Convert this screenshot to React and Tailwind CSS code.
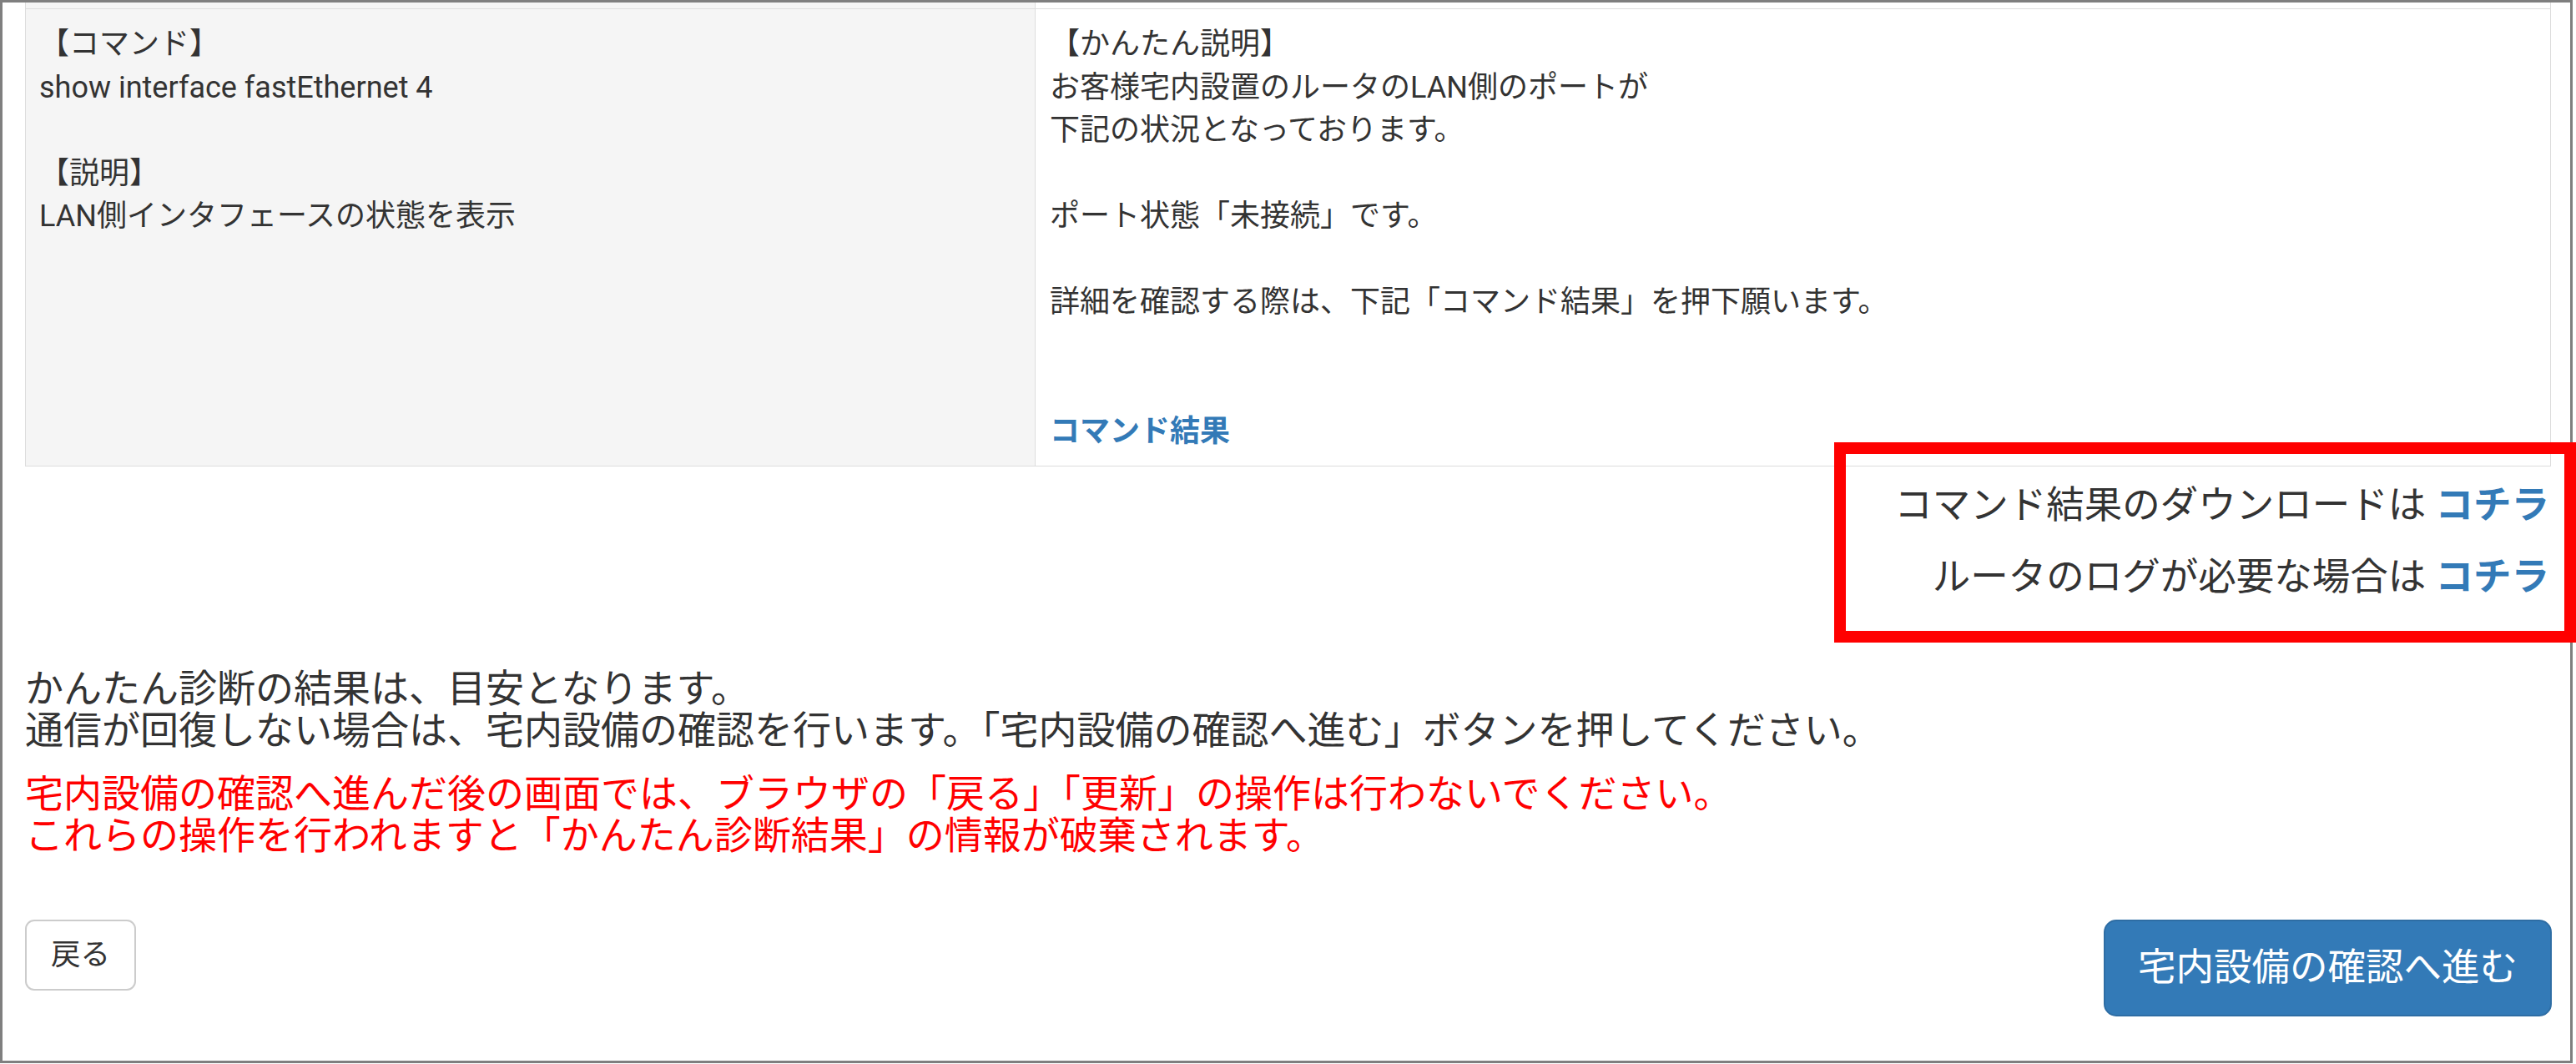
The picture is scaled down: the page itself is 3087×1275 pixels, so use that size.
import React from 'react';

const LEFT_LINES = ['【コマンド】', 'show interface fastEthernet 4', '', '【説明】', 'LAN側インタフェースの状態を表示'];

const RIGHT_LINES = [
  '【かんたん説明】',
  'お客様宅内設置のルータのLAN側のポートが',
  '下記の状況となっております。',
  '',
  'ポート状態「未接続」です。',
  '',
  '詳細を確認する際は、下記「コマンド結果」を押下願います。',
  '',
  ''
];

const Lines = ({ lines }) =>
  lines.map((line, i) => (
    <div key={i} className="h-[51.5px] whitespace-nowrap">
      {line}
    </div>
  ));

const App = () => {
  return (
    <div className="relative w-[3087px] h-[1275px] bg-white text-[#333333] font-[Roboto,'Noto_Sans_CJK_JP',sans-serif]">
      <div className="w-[3083px] h-[1274px] border-[3px] border-[#7f7f7f] pl-[27px] overflow-hidden">
        <div className="w-[3027px]">
          {/* result table (previous row is cut off at the top) */}
          <div className="border-x border-b border-[#dddddd]">
            <div className="grid grid-cols-[1210px_1fr] h-[7px]">
              <div className="bg-[#f5f5f5] border-r border-[#dddddd]" />
              <div />
            </div>
            <div className="grid grid-cols-[1210px_1fr] border-t border-[#dddddd] text-[36px] leading-[51.5px]">
              <div className="bg-[#f5f5f5] border-r border-[#dddddd] pt-[17px] pb-[15px] pl-[16px]">
                <Lines lines={LEFT_LINES} />
              </div>
              <div className="pt-[17px] pb-[15px] pl-[17px]">
                <Lines lines={RIGHT_LINES} />
                <div className="h-[51.5px]">
                  <a className="text-[#337ab7] font-bold cursor-pointer">コマンド結果</a>
                </div>
              </div>
            </div>
          </div>

          <div className="mt-[4px] text-right text-[45.5px] leading-[86px] pr-[2px]">
            <div>
              コマンド結果のダウンロードは <a className="text-[#337ab7] font-bold cursor-pointer">コチラ</a>
            </div>
            <div>
              ルータのログが必要な場合は <a className="text-[#337ab7] font-bold cursor-pointer">コチラ</a>
            </div>
          </div>

          <div className="mt-[65px] text-[46px] leading-[50px]">
            <div>かんたん診断の結果は、目安となります。</div>
            <div>通信が回復しない場合は、宅内設備の確認を行います。「宅内設備の確認へ進む」ボタンを押してください。</div>
          </div>

          <div className="mt-[26px] text-[46px] leading-[50px] text-[#ff0000]">
            <div>宅内設備の確認へ進んだ後の画面では、ブラウザの「戻る」「更新」の操作は行わないでください。</div>
            <div>これらの操作を行われますと「かんたん診断結果」の情報が破棄されます。</div>
          </div>

          <div className="mt-[76px] flex items-start justify-between">
            <button className="border-2 border-[#cccccc] rounded-[11px] bg-white px-[29px] py-[15px] text-[35.5px] leading-[51px] text-[#333333]">
              戻る
            </button>
            <button className="border-2 border-[#2e6da4] rounded-[15px] bg-[#337ab7] px-[39px] py-[25px] text-[45.5px] leading-[62px] text-white -mr-[1px]">
              宅内設備の確認へ進む
            </button>
          </div>
        </div>
      </div>

      {/* annotation frame */}
      <div className="absolute left-[2198px] top-[530px] w-[889px] h-[240px] border-[14px] border-[#ff0000]" />
    </div>
  );
};

export default App;
